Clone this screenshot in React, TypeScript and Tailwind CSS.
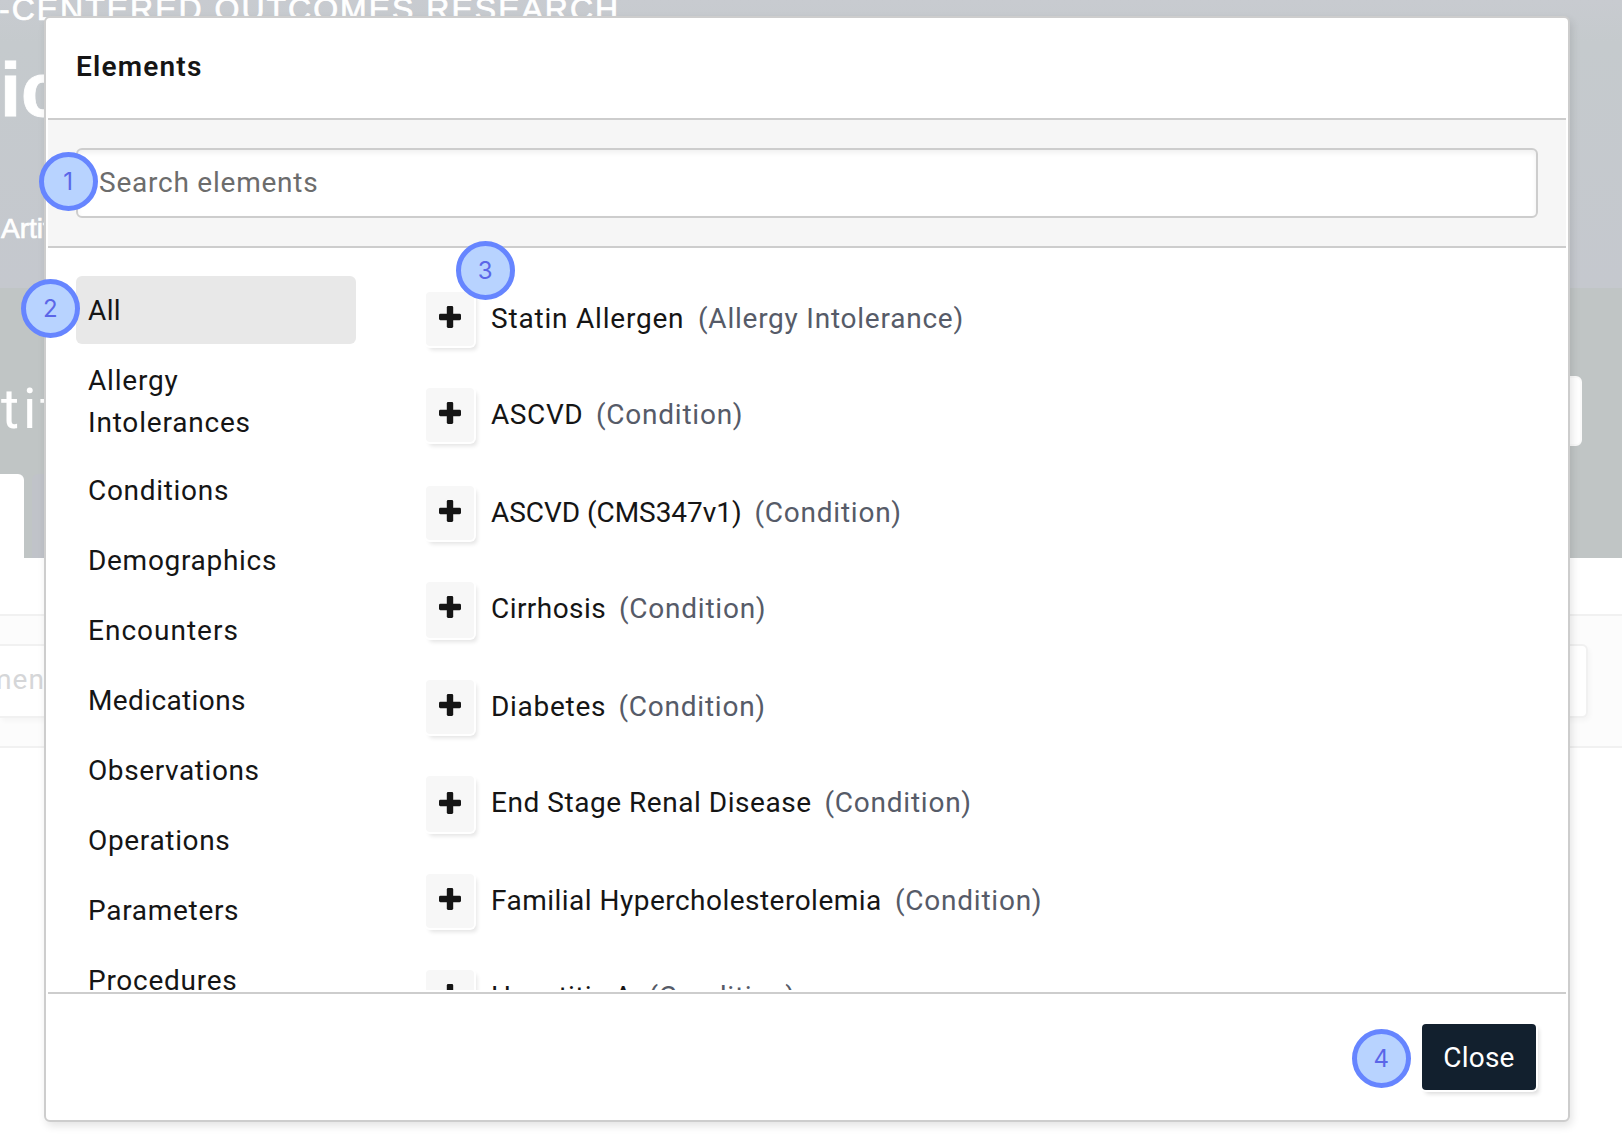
type Category = { label: string[]; tracking: string; active?: boolean };

const categories: Category[] = [
  { label: ["All"], tracking: "tracking-[0.4px]", active: true },
  { label: ["Allergy", "Intolerances"], tracking: "tracking-[0.8px]" },
  { label: ["Conditions"], tracking: "tracking-[0.7px]" },
  { label: ["Demographics"], tracking: "tracking-[0.7px]" },
  { label: ["Encounters"], tracking: "tracking-[1px]" },
  { label: ["Medications"], tracking: "tracking-[0.38px]" },
  { label: ["Observations"], tracking: "tracking-[0.6px]" },
  { label: ["Operations"], tracking: "tracking-[0.66px]" },
  { label: ["Parameters"], tracking: "tracking-[0.7px]" },
  { label: ["Procedures"], tracking: "tracking-[0.74px]" },
];

type Item = {
  name: string;
  kind: string;
  row: string;
  text: string;
  button?: string;
  icon?: string;
};

const items: Item[] = [
  { name: "Statin Allergen", kind: "Allergy Intolerance", row: "h-24", text: "w-[207px] tracking-[0.8px]" },
  { name: "ASCVD", kind: "Condition", row: "h-[98px]", text: "w-[105px] tracking-[0.6px]" },
  { name: "ASCVD (CMS347v1)", kind: "Condition", row: "h-24", text: "w-[263.5px] tracking-[-0.05px]" },
  { name: "Cirrhosis", kind: "Condition", row: "h-[98px]", text: "w-[128px] tracking-[0.45px]", button: "h-14" },
  { name: "Diabetes", kind: "Condition", row: "h-24", text: "w-[127.5px] tracking-[0.72px]" },
  { name: "End Stage Renal Disease", kind: "Condition", row: "h-[98px]", text: "w-[333.5px] tracking-[0.54px]", button: "h-14", icon: "mt-4" },
  { name: "Familial Hypercholesterolemia", kind: "Condition", row: "h-24", text: "w-[404px] tracking-[0.48px]" },
  { name: "Hepatitis A", kind: "Condition", row: "h-24", text: "w-[157.5px] tracking-[0.4px]" },
];

function PlusIcon({ className }: { className: string }) {
  return (
    <svg viewBox="0 0 22 22" fill="currentColor" className={`h-[22px] w-[22px] ${className}`}>
      <rect x="0" y="7.8" width="22" height="6.4" rx="1.4" />
      <rect x="7.8" y="0" width="6.4" height="22" rx="1.4" />
    </svg>
  );
}

function Badge({ n, place }: { n: number; place: string }) {
  return (
    <div
      className={`absolute flex h-[58.5px] w-[58.5px] items-center justify-center rounded-full border-[5px] border-[#6685ff] bg-[#b8d3ff] pt-px font-['Inter',sans-serif] text-[24px] leading-none text-[#5b66e8] ${place}`}
    >
      {n}
    </div>
  );
}

function Backdrop() {
  return (
    <div className="h-full overflow-hidden whitespace-nowrap">
      <div className="h-72 overflow-hidden bg-linear-to-b from-[#c8cbd0] via-[#c5cacd] via-15% to-[#c5c8ce] font-['Liberation_Sans',sans-serif] text-white">
        <p className="-mt-[11px] -ml-px h-10 text-[32px] leading-10 tracking-[2px] [-webkit-text-stroke:0.7px_white]">
          -CENTERED OUTCOMES RESEARCH
        </p>
        <p className="mt-[21px] h-20 text-[76px] leading-[80px] font-bold [-webkit-text-stroke:0.8px_white]">ic</p>
        <p className="mt-[79px] ml-px h-10 text-[28px] leading-10 [-webkit-text-stroke:0.7px_white]">Artifacts</p>
      </div>
      <div className="flex h-[270px] flex-col justify-between bg-[#c0c5c5]">
        <div className="mt-[88px] flex h-[70px] items-start justify-between pr-10">
          <p className="-mt-0.5 pl-px font-['Roboto',sans-serif] text-[55px] leading-[70px] tracking-[4px] text-white">title</p>
          <div className="h-[70px] w-40 rounded-md border-2 border-[#fafafa] bg-white" />
        </div>
        <div className="flex h-[84px] gap-2">
          <div className="w-6 rounded-tr-md bg-white" />
          <div className="w-40 rounded-t-md bg-[#c0c3c9]" />
        </div>
      </div>
      <div className="mt-14 h-[134px] border-y-2 border-[#f1f1f1] bg-[#fcfcfc] pt-7 pr-[34px]">
        <div className="h-[74px] rounded-r-md border-2 border-l-0 border-[#f1f1f1] bg-white shadow-[2px_3px_5px_rgba(0,0,0,0.03)]">
          <p className="-ml-[13px] pt-px font-['Roboto',sans-serif] text-[28px] leading-[66px] tracking-[1px] text-[#d5d6d8]">ment</p>
        </div>
      </div>
    </div>
  );
}

export default function App() {
  return (
    <div className="relative h-[1144px] w-[1622px] overflow-hidden bg-white">
      <Backdrop />

      <div className="absolute top-4 left-11 flex h-[1106px] w-[1526px] flex-col rounded-md border-2 border-[#cdcdcd] bg-white px-0.5 font-['Roboto',sans-serif] text-[28px] leading-[42px] text-[#151515] shadow-[2px_4px_8px_rgba(0,0,0,0.11)]">
        <header className="h-[100px] pt-7 pl-7 font-semibold tracking-[1.2px]">Elements</header>

        <div className="h-[130px] border-y-2 border-[#cdcdcd] bg-[#f6f6f6] px-7 py-7">
          <div className="h-[70px] rounded-md border-2 border-[#cdcdcd] bg-white pt-3 pl-[21px] tracking-[0.77px] text-[#6c6c6c] shadow-[inset_0_3px_5px_rgba(0,0,0,0.06)]">
            Search elements
          </div>
        </div>

        <div className="flex h-[742px] overflow-hidden px-7 pt-7">
          <nav className="flex w-[280px] shrink-0 flex-col gap-0.5">
            {categories.map((c) => (
              <div
                key={c.label[0]}
                className={`shrink-0 rounded-md px-3 pt-3.5 ${c.label.length > 1 ? "h-[108px]" : "h-[68px]"} ${c.active ? "bg-[#e8e8e8]" : ""} ${c.tracking}`}
              >
                {c.label.map((line) => (
                  <span key={line} className="block">
                    {line}
                  </span>
                ))}
              </div>
            ))}
          </nav>

          <ul className="mt-4 ml-[70px] flex flex-col">
            {items.map((it) => (
              <li key={it.name} className={`flex shrink-0 items-start whitespace-nowrap ${it.row}`}>
                <button
                  className={`flex w-12 shrink-0 justify-center rounded-sm bg-[#f7f7f7] shadow-[0_0_0_2px_#fff,3px_4px_4px_rgba(0,0,0,0.11)] ${it.button ?? "h-[54px]"}`}
                >
                  <PlusIcon className={it.icon ?? "mt-3.5"} />
                </button>
                <span className={`mt-1.5 ml-[17px] shrink-0 ${it.text}`}>{it.name}</span>
                <span className="mt-1.5 tracking-[0.76px] text-[#565b68]">({it.kind})</span>
              </li>
            ))}
          </ul>
        </div>

        <div className="mt-0.5 flex flex-1 justify-end border-t-2 border-[#cdcdcd] pt-[30px] pr-[30px]">
          <button className="h-[66px] w-[114px] rounded-sm bg-[#12202e] pt-px tracking-[0.2px] text-white shadow-[0_0_0_2px_#fff,3px_4px_4px_rgba(0,0,0,0.14)]">
            Close
          </button>
        </div>
      </div>

      <Badge n={1} place="top-[152px] left-[39px]" />
      <Badge n={2} place="top-[279px] left-[21px]" />
      <Badge n={3} place="top-[241px] left-[456px]" />
      <Badge n={4} place="top-[1029px] left-[1352px]" />
    </div>
  );
}
